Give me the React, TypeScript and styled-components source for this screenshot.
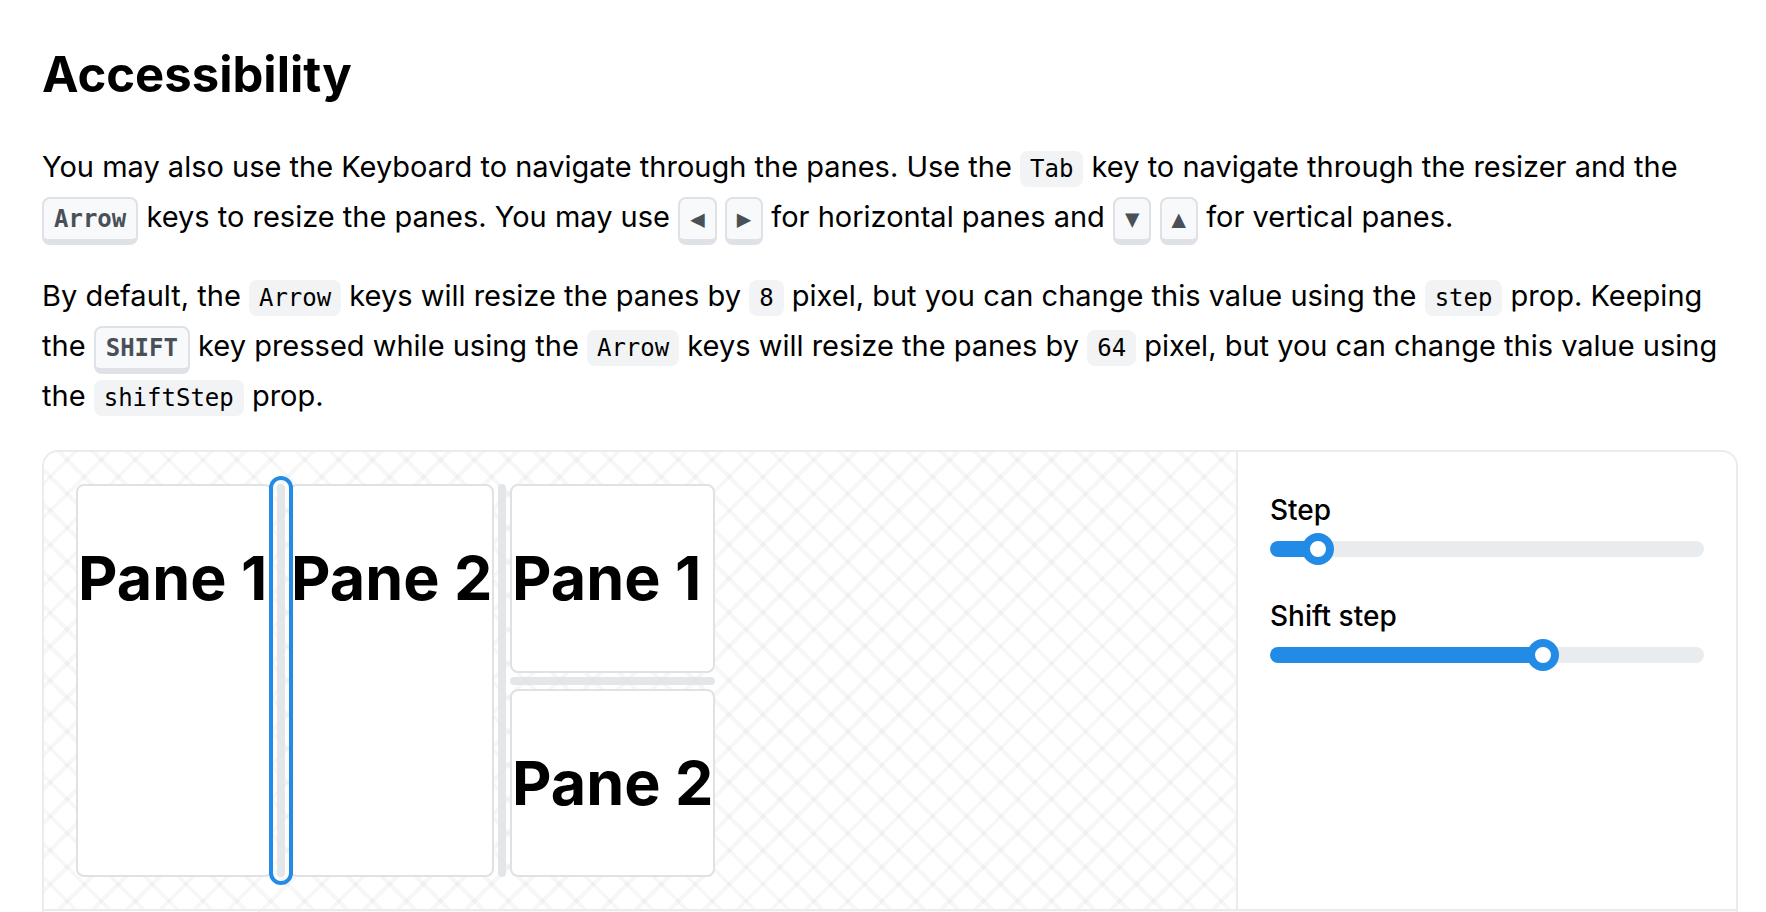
import React, { useState } from "react";
import styled, { createGlobalStyle } from "styled-components";

const Global = createGlobalStyle`
  *, *::before, *::after { box-sizing: border-box; }
  body {
    margin: 0;
    background: #ffffff;
    color: #000000;
    font-family: Inter, "Liberation Sans", sans-serif;
    font-size: 29px;
    line-height: 50px;
  }
`;

const Page = styled.main`
  padding: 40px 28px 0 42px;
`;

const Title = styled.h2`
  margin: 0 0 32px;
  font-size: 49px;
  line-height: 70px;
  font-weight: 700;
`;

const Paragraph = styled.p`
  margin: 0 0 29px;
`;

const Code = styled.code`
  padding: 4px 10px;
  border-radius: 8px;
  background: #f1f3f5;
  font-family: "DejaVu Sans Mono", monospace;
  font-size: 24px;
  line-height: 30px;
`;

const Key = styled.kbd`
  padding: 6px 10px;
  border: 2px solid #dee2e6;
  border-bottom-width: 6px;
  border-radius: 8px;
  background: #f8f9fa;
  color: #495057;
  font-family: "DejaVu Sans Mono", monospace;
  font-size: 24px;
  font-weight: 700;
  line-height: 30px;
`;

const Demo = styled.section`
  border: 2px solid #e9ecef;
  border-bottom: 0;
  border-radius: 16px 16px 0 0;
  overflow: hidden;
`;

const DemoTop = styled.div`
  display: flex;
  border-bottom: 2px solid #e9ecef;
`;

const Canvas = styled.div`
  flex: 1;
  display: flex;
  align-items: flex-start;
  padding: 32px;
  background-image:
    repeating-linear-gradient(45deg, transparent 0 20px, rgba(0, 0, 0, 0.03) 20px 24px),
    repeating-linear-gradient(135deg, transparent 0 20px, rgba(0, 0, 0, 0.03) 20px 24px);
`;

const PaneRow = styled.div`
  display: flex;
  gap: 4px;
  height: 393px;
`;

const PaneColumn = styled.div`
  display: flex;
  flex-direction: column;
  gap: 4px;
`;

const Pane = styled.div<{ $width: number }>`
  flex: 1 1 auto;
  width: ${(p) => p.$width}px;
  border: 2px solid #dee2e6;
  border-radius: 8px;
  background: #ffffff;
`;

const PaneTitle = styled.h1`
  margin: 50px 0 0;
  font-size: 61px;
  line-height: 84px;
  font-weight: 700;
  white-space: nowrap;
`;

const Resizer = styled.button<{ $horizontal?: boolean; $focused?: boolean }>`
  flex: none;
  ${(p) => (p.$horizontal ? "height: 8px;" : "width: 8px;")}
  padding: 0;
  border: 0;
  border-radius: 4px;
  background: rgba(222, 227, 230, 0.85);
  cursor: ${(p) => (p.$horizontal ? "row-resize" : "col-resize")};
  ${(p) => (p.$focused ? "position: relative; outline: 4px solid #228be6; outline-offset: 4px;" : "")}
`;

const Controls = styled.div`
  width: 500px;
  display: flex;
  flex-direction: column;
  gap: 28px;
  padding: 35px 32px;
  border-left: 2px solid #e9ecef;
`;

const Field = styled.label`
  display: block;
  font-size: 28px;
  line-height: 46px;
  font-weight: 500;
`;

const Range = styled.input`
  --filled: calc(16px + (100% - 32px) * var(--value) / 100);
  appearance: none;
  display: block;
  width: 100%;
  height: 32px;
  margin: 0;
  background: none;

  &::-webkit-slider-runnable-track {
    height: 16px;
    border-radius: 8px;
    background: linear-gradient(to right, #228be6 var(--filled), #e9ecef var(--filled));
  }

  &::-webkit-slider-thumb {
    appearance: none;
    width: 32px;
    height: 32px;
    margin-top: -8px;
    border: 8px solid #228be6;
    border-radius: 50%;
    background: #ffffff;
  }
`;

const CodeBar = styled.div`
  display: flex;
  height: 2px;
  background: #f8f9fa;
`;

const CodeTab = styled.div`
  width: 216px;
  border-right: 2px solid #e9ecef;
  background: #ffffff;
`;

function SliderField({ label, initial }: { label: string; initial: number }) {
  const [value, setValue] = useState(initial);
  return (
    <Field>
      {label}
      <Range
        type="range"
        min={0}
        max={100}
        value={value}
        onChange={(e) => setValue(Number(e.target.value))}
        style={{ "--value": value } as React.CSSProperties}
      />
    </Field>
  );
}

export default function App() {
  return (
    <>
      <Global />
      <Page>
        <Title>Accessibility</Title>
        <Paragraph>
          You may also use the Keyboard to navigate through the panes. Use the <Code>Tab</Code> key to navigate through
          the resizer and the <Key>Arrow</Key> keys to resize the panes. You may use <Key>◀</Key> <Key>▶</Key> for
          horizontal panes and <Key>▼</Key> <Key>▲</Key> for vertical panes.
        </Paragraph>
        <Paragraph>
          By default, the <Code>Arrow</Code> keys will resize the panes by <Code>8</Code> pixel, but you can change this
          value using the <Code>step</Code> prop. Keeping the <Key>SHIFT</Key> key pressed while using the{" "}
          <Code>Arrow</Code> keys will resize the panes by <Code>64</Code> pixel, but you can change this value using
          the <Code>shiftStep</Code> prop.
        </Paragraph>
        <Demo>
          <DemoTop>
            <Canvas>
              <PaneRow>
                <Pane $width={197}><PaneTitle>Pane 1</PaneTitle></Pane>
                <Resizer $focused aria-label="Resize panes" />
                <Pane $width={205}><PaneTitle>Pane 2</PaneTitle></Pane>
                <Resizer aria-label="Resize panes" />
                <PaneColumn>
                  <Pane $width={205}><PaneTitle>Pane 1</PaneTitle></Pane>
                  <Resizer $horizontal aria-label="Resize rows" />
                  <Pane $width={205}><PaneTitle>Pane 2</PaneTitle></Pane>
                </PaneColumn>
              </PaneRow>
            </Canvas>
            <Controls>
              <SliderField label="Step" initial={8} />
              <SliderField label="Shift step" initial={64} />
            </Controls>
          </DemoTop>
          <CodeBar><CodeTab /></CodeBar>
        </Demo>
      </Page>
    </>
  );
}
